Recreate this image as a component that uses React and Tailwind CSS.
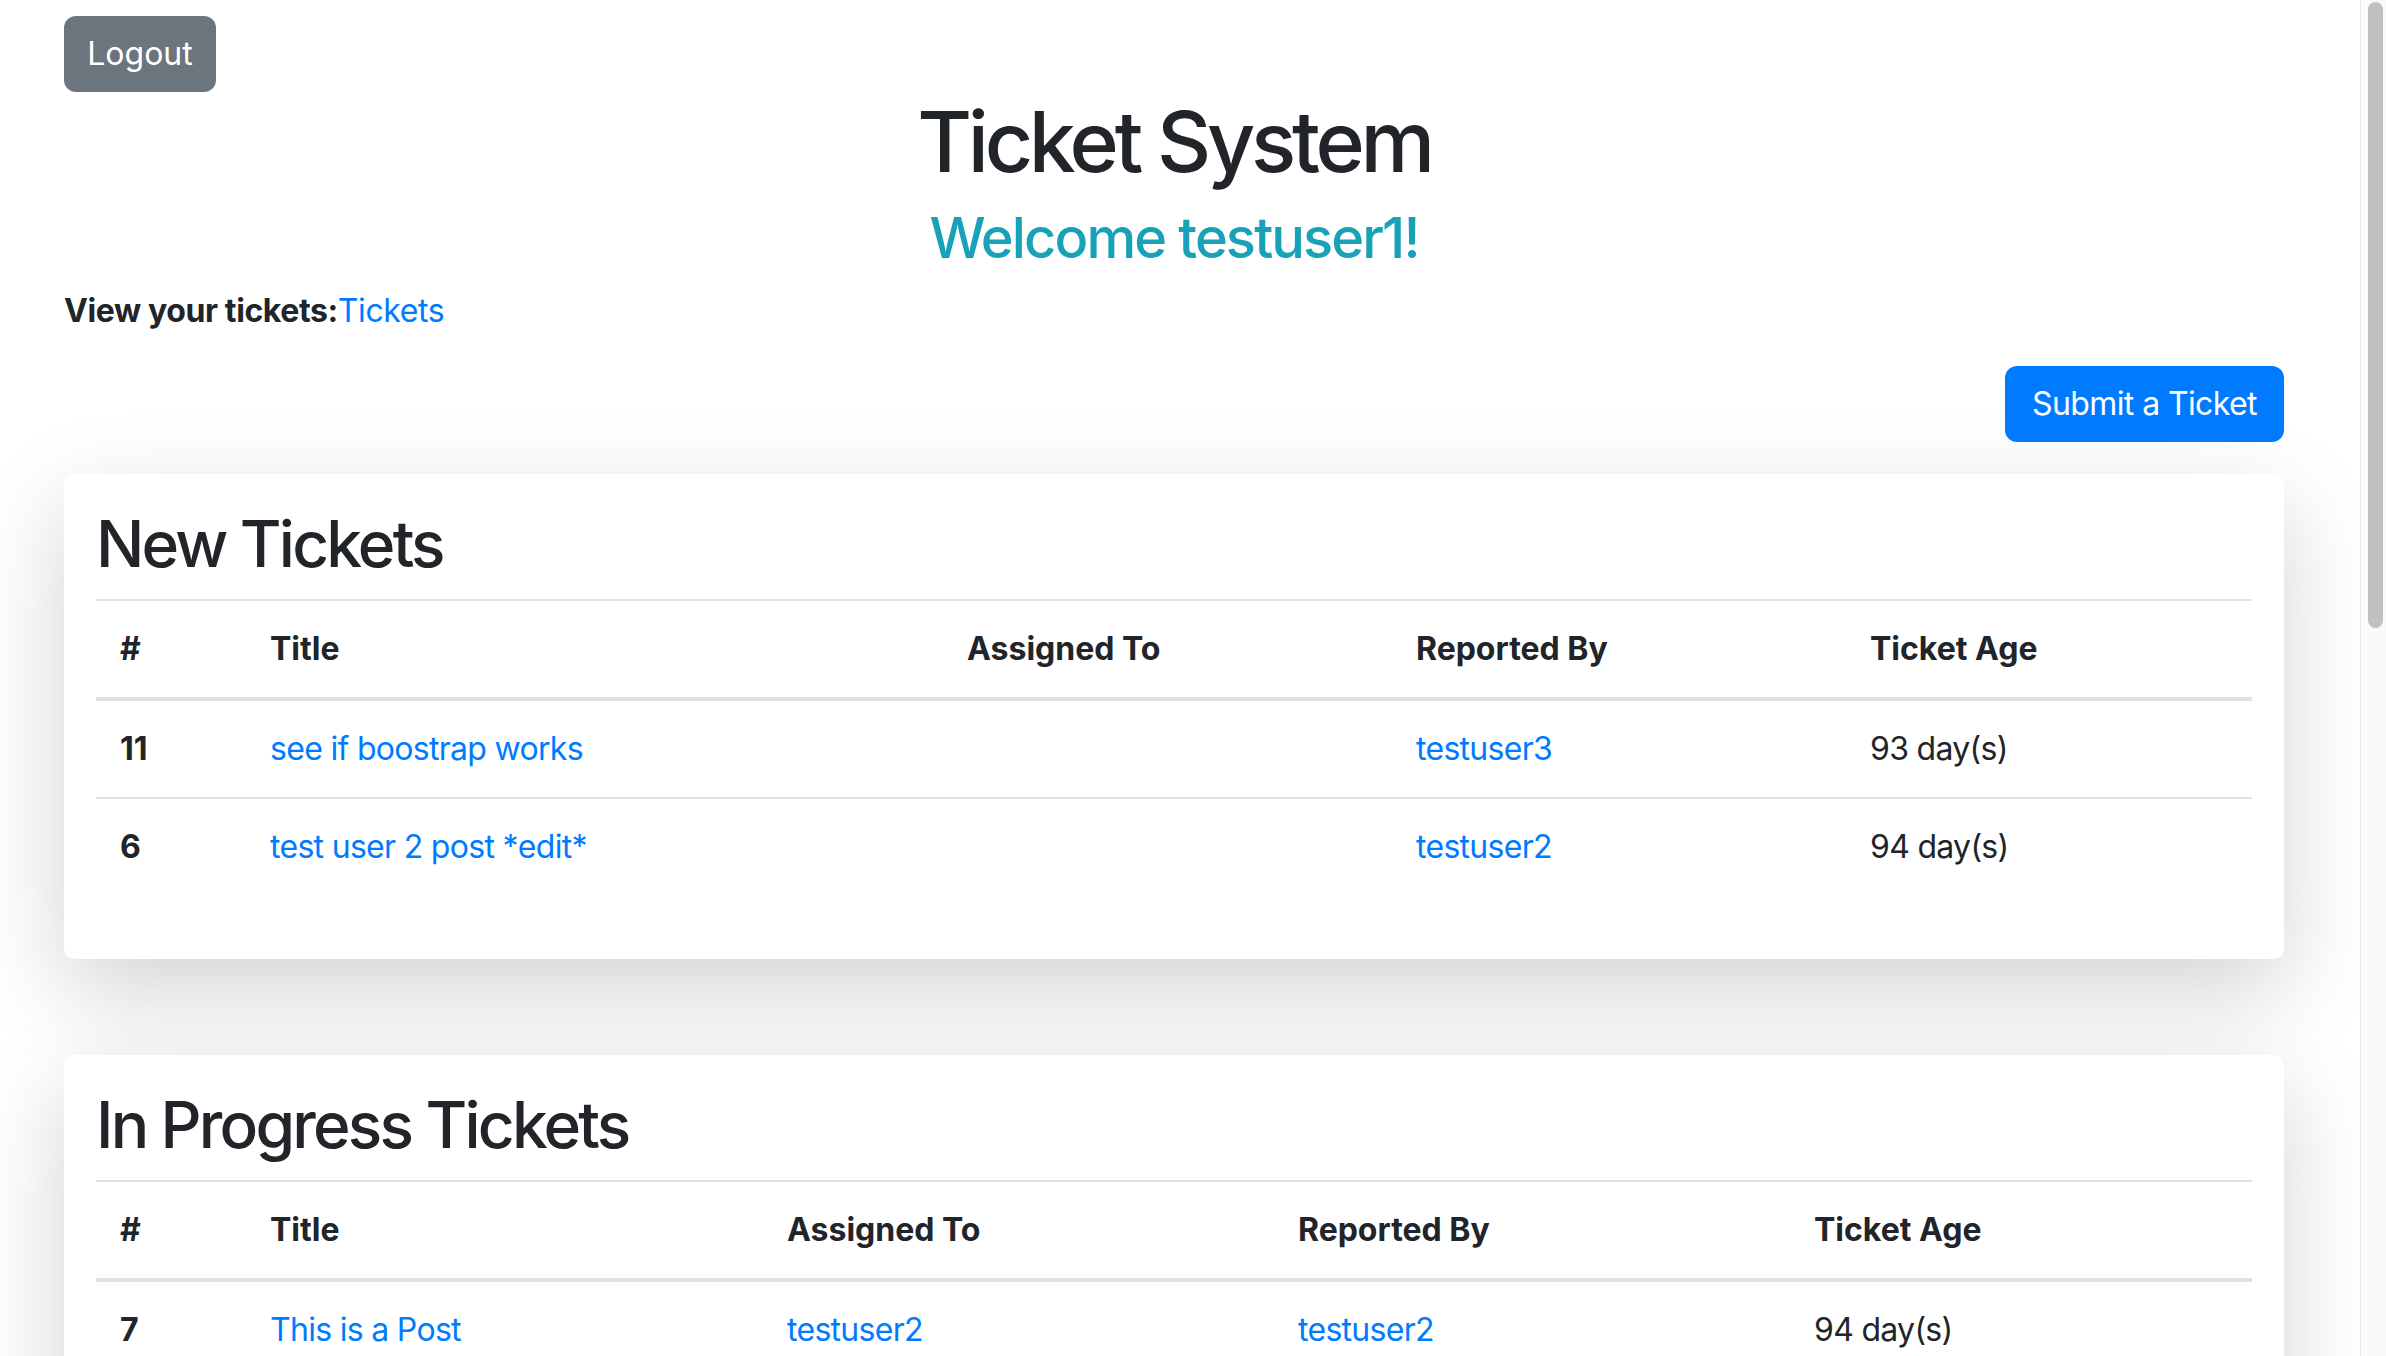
import React from "react";

const font = { fontFamily: "Inter, 'Noto Sans', 'Liberation Sans', sans-serif" };

function Table({ widths, rows }) {
  const headers = ["#", "Title", "Assigned To", "Reported By", "Ticket Age"];
  return (
    <table className="w-full table-fixed border-collapse text-[32px] leading-[48px] text-[#212529]">
      <thead>
        <tr>
          {headers.map((h, i) => (
            <th
              key={h}
              className={`${widths[i]} border-t-2 border-b-4 border-[#dee2e6] px-[24px] py-[24px] text-left align-bottom font-bold`}
            >
              {h}
            </th>
          ))}
        </tr>
      </thead>
      <tbody className="tracking-[-0.7px]">
        {rows.map((r, idx) => (
          <tr key={r.id}>
            <th className={`${idx === 0 ? "" : "border-t-2"} border-[#dee2e6] px-[24px] py-[24px] text-left align-top font-bold tracking-normal`}>
              {r.id}
            </th>
            <td className={`${idx === 0 ? "" : "border-t-2"} border-[#dee2e6] px-[24px] py-[24px] align-top`}>
              <a className="text-[#007bff]">{r.title}</a>
            </td>
            <td className={`${idx === 0 ? "" : "border-t-2"} border-[#dee2e6] px-[24px] py-[24px] align-top`}>
              {r.assigned ? <a className="text-[#007bff]">{r.assigned}</a> : null}
            </td>
            <td className={`${idx === 0 ? "" : "border-t-2"} border-[#dee2e6] px-[24px] py-[24px] align-top`}>
              <a className="text-[#007bff]">{r.reporter}</a>
            </td>
            <td className={`${idx === 0 ? "" : "border-t-2"} border-[#dee2e6] px-[24px] py-[24px] align-top`}>
              {r.age}
            </td>
          </tr>
        ))}
      </tbody>
    </table>
  );
}

function Card({ title, widths, rows }) {
  return (
    <div className="rounded-[10px] bg-white p-[32px] shadow-[0_32px_96px_rgba(0,0,0,0.175)]">
      <h2 className="mb-[16px] text-[64px] font-medium leading-[1.2] tracking-[-2.8px] text-[#212529]">{title}</h2>
      <Table widths={widths} rows={rows} />
      <div className="h-[32px]" />
    </div>
  );
}

export default function App() {
  return (
    <div className="flex h-[1356px] w-full overflow-hidden bg-white" style={font}>
      <div className="min-w-0 flex-1 pl-[64px] pr-[76px]">
        <div className="pt-[16px]">
          <button className="flex h-[76px] w-[152px] items-center justify-center rounded-[12px] bg-[#6c757d] text-[32px] leading-[48px] text-white">
            Logout
          </button>
        </div>
        <h1 className="mb-[12px] text-center text-[84px] font-medium leading-[1.2] tracking-[-4.3px] text-[#212529]">
          Ticket System
        </h1>
        <h3 className="text-center text-[56px] font-medium leading-[1.2] tracking-[-1.9px] text-[#17a2b8]">
          Welcome testuser1!
        </h3>
        <p className="mt-[15px] text-[32px] leading-[48px] tracking-[-0.4px] text-[#212529]">
          <b className="font-bold">View your tickets:</b>
          <a className="text-[#007bff]">Tickets</a>
        </p>
        <div className="mt-[31px] flex justify-end">
          <button className="flex h-[76px] w-[279px] items-center justify-center rounded-[12px] bg-[#007bff] text-[32px] leading-[48px] tracking-[-0.6px] text-white">
            Submit a Ticket
          </button>
        </div>
        <div className="mt-[32px]">
          <Card
            title="New Tickets"
            widths={["w-[150px]", "w-[697px]", "w-[449px]", "w-[454px]", ""]}
            rows={[
              { id: "11", title: "see if boostrap works", assigned: "", reporter: "testuser3", age: "93 day(s)" },
              { id: "6", title: "test user 2 post *edit*", assigned: "", reporter: "testuser2", age: "94 day(s)" },
            ]}
          />
        </div>
        <div className="mt-[96px]">
          <Card
            title="In Progress Tickets"
            widths={["w-[150px]", "w-[517px]", "w-[511px]", "w-[516px]", ""]}
            rows={[
              { id: "7", title: "This is a Post", assigned: "testuser2", reporter: "testuser2", age: "94 day(s)" },
            ]}
          />
        </div>
      </div>
      <div className="flex w-[26px] shrink-0 border-l border-[#e8e8e8] bg-[#fafafa] pl-[7px] pr-[3px] pt-[2px]">
        <div className="h-[626px] w-full rounded-full bg-[#c1c1c1]" />
      </div>
    </div>
  );
}
